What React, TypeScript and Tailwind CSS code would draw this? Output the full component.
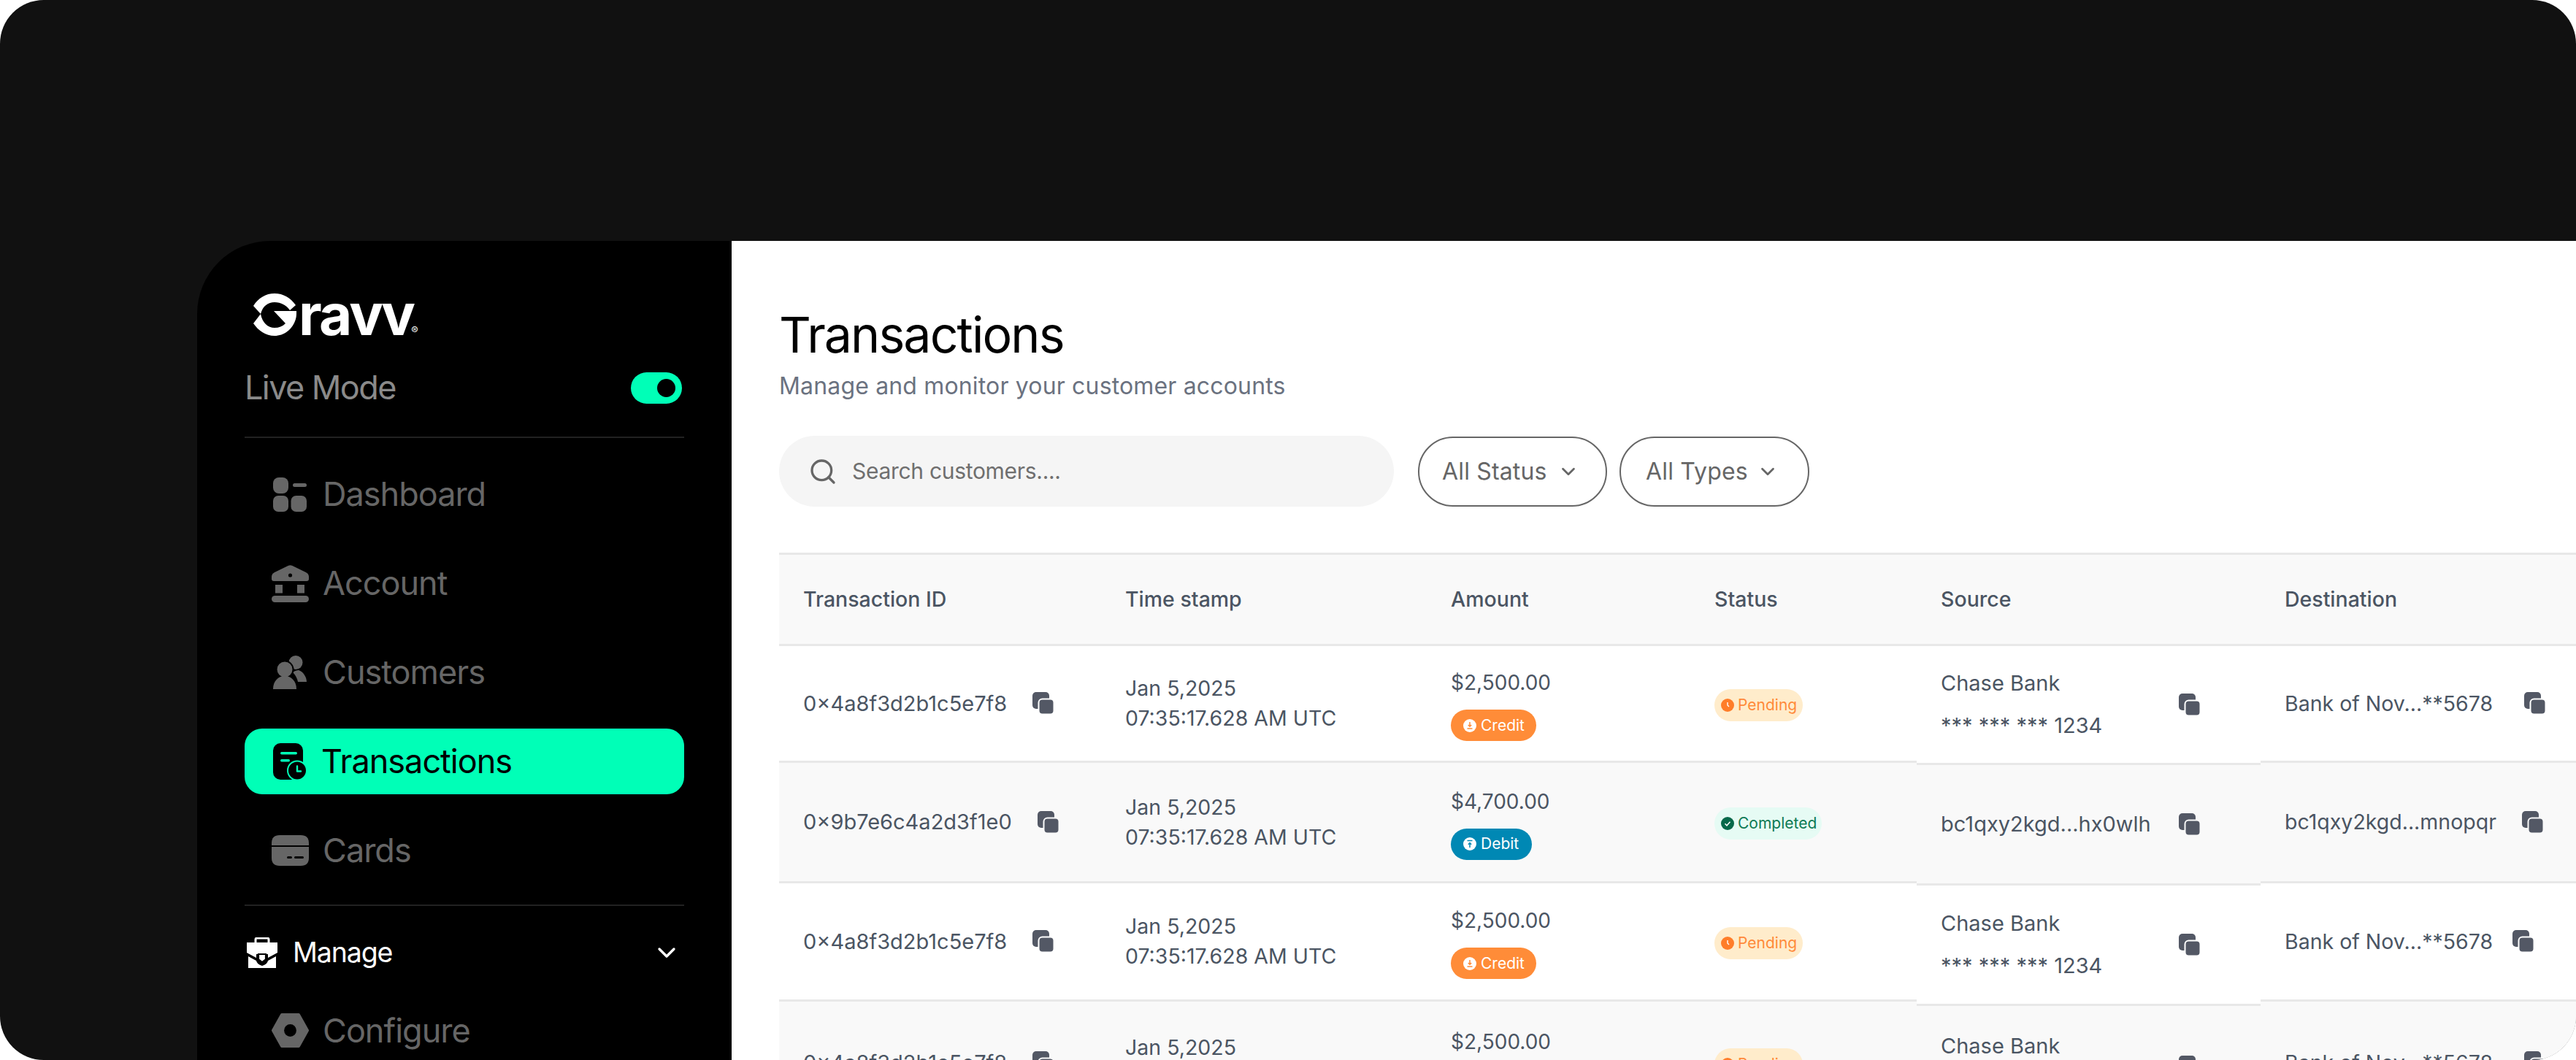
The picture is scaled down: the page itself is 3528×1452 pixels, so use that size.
import React from 'react';
import { ChevronDown, Search } from 'lucide-react';

// Нижние границы строк немного разные в колонках, поэтому таблица собрана по колонкам
const rowHeights = [160, 165, 162, 170];
const sourceHeights = [163, 165, 165, 170];

type Kind = 'Credit' | 'Debit';
type Status = 'Pending' | 'Completed';

const rows: {
  id: string;
  kind: Kind;
  amount: string;
  status: Status;
  source: string;
  sourceSub?: string;
  dest: string;
  destGap: string;
}[] = [
  { id: '0×4a8f3d2b1c5e7f8', kind: 'Credit', amount: '$2,500.00', status: 'Pending', source: 'Chase Bank', sourceSub: '*** *** *** 1234', dest: 'Bank of Nov...**5678', destGap: 'ml-[43px]' },
  { id: '0×9b7e6c4a2d3f1e0', kind: 'Debit', amount: '$4,700.00', status: 'Completed', source: 'bc1qxy2kgd...hx0wlh', dest: 'bc1qxy2kgd...mnopqr', destGap: 'ml-[35px]' },
  { id: '0×4a8f3d2b1c5e7f8', kind: 'Credit', amount: '$2,500.00', status: 'Pending', source: 'Chase Bank', sourceSub: '*** *** *** 1234', dest: 'Bank of Nov...**5678', destGap: 'ml-[27px]' },
  { id: '0×4a8f3d2b1c5e7f8', kind: 'Credit', amount: '$2,500.00', status: 'Pending', source: 'Chase Bank', sourceSub: '*** *** *** 1234', dest: 'Bank of Nov...**5678', destGap: 'ml-[43px]' },
];

function CopyIcon({ zebra }: { zebra: boolean }) {
  return (
    <svg viewBox="0 0 30 31" className="h-[31px] w-[30px] shrink-0">
      <rect x="0" y="0" width="23" height="23" rx="5" fill="#535865" />
      <rect x="8.5" y="9.5" width="21" height="21" rx="5" fill="#535865" stroke={zebra ? '#f9f9f9' : '#ffffff'} strokeWidth="2" />
    </svg>
  );
}

function DashboardIcon() {
  return (
    <svg viewBox="0 0 46 47" className="h-[47px] w-[46px]" fill="#666666">
      <rect x="0" y="0" width="21" height="22" rx="8" />
      <rect x="27" y="8" width="19" height="5" rx="2.5" />
      <rect x="0" y="25" width="21" height="22" rx="7" />
      <rect x="24.5" y="25" width="21.5" height="22" rx="7" />
    </svg>
  );
}

function AccountIcon() {
  return (
    <svg viewBox="0 0 51 51" className="h-[51px] w-[51px]" fill="#666666">
      <path d="M23 .8q2.5-1.2 5 0L47 10q4 2 4 6v3q0 3-3 3H3q-3 0-3-3v-3q0-4 4-6z" />
      <circle cx="25.5" cy="14" r="2.6" fill="#000000" />
      <rect x="5" y="27" width="10" height="11.5" />
      <rect x="35" y="27" width="10" height="11.5" />
      <rect x="0" y="42" width="51" height="9" rx="4.5" />
    </svg>
  );
}

function CustomersIcon() {
  return (
    <svg viewBox="0 0 46 46" className="h-[46px] w-[46px]" fill="#666666">
      <circle cx="31" cy="9.5" r="9.5" />
      <path d="M27 23c2-2 6-3 8-3 6 2 11 9 11 16H34c-1-5-3-9-7-13z" />
      <circle cx="16" cy="19" r="11.5" stroke="#000000" strokeWidth="2" />
      <path d="M0 46c0-11 7-18 16-18s16 7 16 18z" />
    </svg>
  );
}

function TransactionsIcon() {
  return (
    <svg viewBox="0 0 47 51" className="h-[51px] w-[47px]">
      <rect x="0" y="0" width="41" height="50" rx="10" fill="#000000" />
      <rect x="10" y="12" width="23" height="3.5" rx="1.7" fill="#00ffb7" />
      <rect x="10" y="22" width="13" height="3.5" rx="1.7" fill="#00ffb7" />
      <circle cx="33" cy="37.5" r="13" fill="#000000" stroke="#00ffb7" strokeWidth="2" />
      <path d="M33 31.5v7h5" fill="none" stroke="#00ffb7" strokeWidth="2.4" strokeLinecap="round" strokeLinejoin="round" />
    </svg>
  );
}

function CardsIcon() {
  return (
    <svg viewBox="0 0 51 42" className="h-[42px] w-[51px]" fill="#666666">
      <path d="M0 11Q0 0 11 0h29q11 0 11 11v3H0z" />
      <path d="M0 16h51v15q0 11-11 11H11Q0 42 0 31z" />
      <rect x="21" y="29" width="7" height="3" rx="1.5" fill="#000000" />
      <rect x="31" y="29" width="13" height="3" rx="1.5" fill="#000000" />
    </svg>
  );
}

function ManageIcon() {
  return (
    <svg viewBox="0 0 42 42" className="h-[42px] w-[42px]" fill="#ffffff">
      <path d="M12 8V3q0-2 2-2h14q2 0 2 2v5" fill="none" stroke="#ffffff" strokeWidth="3" />
      <path d="M0 7h42v14l-13 7v-5H13v5L0 21z" />
      <path d="M2 26l11 6q1 5 8 7 7-2 8-7l11-6v16H2z" />
      <path d="M16 23h10v7l-5 4-5-4z" fill="#ffffff" stroke="#000000" strokeWidth="2.2" />
    </svg>
  );
}

function ConfigureIcon() {
  return (
    <svg viewBox="0 0 51 47" className="h-[47px] w-[51px]">
      <path fillRule="evenodd" fill="#666666" stroke="#666666" strokeWidth="4" strokeLinejoin="round" d="M2 23.5 14 2h23l12 21.5L37 45H14zM25.5 15a8.5 8.5 0 1 0 0 17 8.5 8.5 0 0 0 0-17z" />
      <circle cx="25.5" cy="23.5" r="8.4" fill="#000000" />
    </svg>
  );
}

function GravvMark() {
  return (
    <svg viewBox="0 0 59 58" className="h-[58px] w-[59px]" fill="#ffffff">
      <path d="M0 17C7 6 17 0 29 0c12 0 22 6 29 16l-8 7c-5-7-12-11-21-11-9 0-16 5-19 16z" />
      <path d="M0 41l10-13c2 12 10 19 19 19 6 0 11-2 15-6L28 24h31c0 4 0 8-1 11C54 49 42 58 29 58 17 58 7 51 0 41z" />
    </svg>
  );
}

function NavItem({ icon, label, active }: { icon: React.ReactNode; label: string; active?: boolean }) {
  return (
    <div
      className={`flex h-[90px] items-center rounded-[24px] pl-[35px] text-[45px] tracking-[-0.022em] ${
        active ? 'bg-[#00ffb7] text-black' : 'text-[#666666]'
      }`}
    >
      <div className="flex w-[54px] justify-center">{icon}</div>
      <span className={active ? 'ml-[16px]' : 'ml-[18px]'}>{label}</span>
    </div>
  );
}

function KindBadge({ kind }: { kind: Kind }) {
  const credit = kind === 'Credit';
  return (
    <div
      className={`flex h-[43px] items-center gap-[6px] self-start rounded-full pl-[17px] text-[21px] text-white ${
        credit ? 'w-[117px] bg-[#ff8c38]' : 'w-[111px] bg-[#0088b4]'
      }`}
    >
      <svg viewBox="0 0 18 18" className="h-[18px] w-[18px]">
        <circle cx="9" cy="9" r="9" fill="#ffffff" />
        {credit ? (
          <path d="M9 4v6M6.8 8 9 10.2 11.2 8M5.5 13h7" fill="none" stroke="#ff8c38" strokeWidth="1.5" />
        ) : (
          <path d="M5.5 4.5h7M9 14V7.5M6.8 9.7 9 7.5l2.2 2.2" fill="none" stroke="#0088b4" strokeWidth="1.5" />
        )}
      </svg>
      <span>{kind}</span>
    </div>
  );
}

function StatusBadge({ status }: { status: Status }) {
  const pending = status === 'Pending';
  return (
    <div
      className={`flex h-[44px] items-center gap-[5px] rounded-full pl-[9px] text-[21px] ${
        pending ? 'w-[121px] bg-[#ffeccb] text-[#ff8a3a]' : 'w-[147px] bg-[#e6fbf4] text-[#0e7a55]'
      }`}
    >
      <svg viewBox="0 0 18 18" className="h-[18px] w-[18px]">
        <circle cx="9" cy="9" r="9" fill={pending ? '#ff7d29' : '#07694a'} />
        {pending ? (
          <path d="M9 5v4l2 2" fill="none" stroke="#ffffff" strokeWidth="1.4" />
        ) : (
          <path d="M5.5 9.3 8 11.8l4.5-5" fill="none" stroke="#ffffff" strokeWidth="1.5" />
        )}
      </svg>
      <span>{status}</span>
    </div>
  );
}

function Column({
  title,
  width,
  heights = rowHeights,
  cellClass = '',
  children,
}: {
  title: string;
  width: string;
  heights?: number[];
  cellClass?: string;
  children: (i: number) => React.ReactNode;
}) {
  return (
    <div className={`flex shrink-0 flex-col ${width}`}>
      <div className="flex h-[128px] items-center border-y-[3px] border-[#e8e8e8] bg-[#f9f9f9] pl-[33px] font-medium">
        {title}
      </div>
      {heights.map((h, i) => (
        <div
          key={i}
          style={{ height: h }}
          className={`flex items-center border-b-[3px] border-[#e8e8e8] pl-[33px] ${cellClass} ${i % 2 === 1 ? 'bg-[#f9f9f9]' : 'bg-white'}`}
        >
          {children(i)}
        </div>
      ))}
    </div>
  );
}

function Pill({ label, className }: { label: string; className: string }) {
  return (
    <div className={`flex h-[96px] items-center justify-between rounded-full border-[2px] border-[#666666] text-[32px] tracking-[0.005em] text-[#666666] ${className}`}>
      <span>{label}</span>
      <ChevronDown size={30} strokeWidth={2.2} />
    </div>
  );
}

export default function App() {
  return (
    <div className="flex h-[1452px] w-[3528px] overflow-hidden rounded-[60px] bg-[#111111] pl-[270px] pt-[330px] font-['Inter',sans-serif]">
      {/* Sidebar */}
      <aside className="h-full w-[732px] shrink-0 rounded-tl-[100px] bg-black px-[65px] pt-[72px]">
        <div className="flex items-end pl-[12px]">
          <GravvMark />
          <span className="ml-[3px] text-[78px] font-bold leading-[58px] tracking-[-0.035em] text-white">ravv</span>
          <span className="-ml-[3px] text-[14px] leading-none text-white">®</span>
        </div>
        <div className="mt-[46px] flex h-[50px] items-center justify-between pr-[3px]">
          <span className="text-[45px] tracking-[-0.035em] text-[#8a8a8a]">Live Mode</span>
          <div className="flex h-[43px] w-[70px] items-center justify-end rounded-full bg-[#00ffb7] pr-[9px]">
            <div className="h-[25px] w-[25px] rounded-full bg-black" />
          </div>
        </div>
        <div className="mt-[42px] h-[2px] bg-[#222222]" />
        <nav className="mt-[32px] flex flex-col gap-[32px]">
          <NavItem icon={<DashboardIcon />} label="Dashboard" />
          <NavItem icon={<AccountIcon />} label="Account" />
          <NavItem icon={<CustomersIcon />} label="Customers" />
          <NavItem icon={<TransactionsIcon />} label="Transactions" active />
          <NavItem icon={<CardsIcon />} label="Cards" />
        </nav>
        <div className="mt-[29px] h-[2px] bg-[#222222]" />
        <div className="mt-[36px] flex items-center justify-between pl-[3px] pr-[4px] text-white">
          <div className="flex items-center gap-[21px]">
            <ManageIcon />
            <span className="text-[37.5px] tracking-[-0.03em]">Manage</span>
          </div>
          <ChevronDown size={40} strokeWidth={2} />
        </div>
        <div className="mt-[33px]">
          <NavItem icon={<ConfigureIcon />} label="Configure" />
        </div>
      </aside>

      {/* Main */}
      <main className="min-w-0 flex-1 overflow-hidden bg-white pl-[65px] pt-[90px]">
        <h1 className="text-[68px] leading-[76px] tracking-[-0.028em] text-black">Transactions</h1>
        <p className="mt-[13px] text-[32px] leading-[40px] tracking-[0.005em] text-[#6b7280]">Manage and monitor your customer accounts</p>
        <div className="mt-[48px] flex items-center">
          <div className="flex h-[97px] w-[842px] items-center rounded-full bg-[#f5f5f5] pl-[40px] text-[#666666]">
            <Search size={40} strokeWidth={2} />
            <span className="ml-[20px] text-[30px] tracking-[-0.01em] text-[#6f6f6f]">Search customers....</span>
          </div>
          <div className="ml-[33px] flex gap-[17px]">
            <Pill label="All Status" className="w-[259px] pl-[31px] pr-[36px]" />
            <Pill label="All Types" className="w-[260px] pl-[34px] pr-[40px]" />
          </div>
        </div>

        {/* Table */}
        <div className="mt-[63px] flex w-[3000px] text-[28.5px] leading-[34px] text-[#4b5563]">
          <Column title="Transaction ID" width="w-[441px]">
            {(i) => (
              <div className="flex items-center gap-[35px] text-[29px]">
                <span>{rows[i].id}</span>
                <CopyIcon zebra={i % 2 === 1} />
              </div>
            )}
          </Column>
          <Column title="Time stamp" width="w-[446px]">
            {() => (
              <div className="flex flex-col gap-[7px]">
                <span>Jan 5,2025</span>
                <span>07:35:17.628 AM UTC</span>
              </div>
            )}
          </Column>
          <Column title="Amount" width="w-[361px]" cellClass="pt-[6px]">
            {(i) => (
              <div className="flex flex-col gap-[20px] text-[28px]">
                <span>{rows[i].amount}</span>
                <KindBadge kind={rows[i].kind} />
              </div>
            )}
          </Column>
          <Column title="Status" width="w-[310px]" cellClass="pt-[4px]">
            {(i) => <StatusBadge status={rows[i].status} />}
          </Column>
          <Column title="Source" width="w-[471px]" heights={sourceHeights}>
            {(i) => (
              <div className="flex w-[356px] items-center justify-between text-[29px]">
                <div className="flex flex-col gap-[24px]">
                  <span>{rows[i].source}</span>
                  {rows[i].sourceSub && <span>{rows[i].sourceSub}</span>}
                </div>
                <CopyIcon zebra={i % 2 === 1} />
              </div>
            )}
          </Column>
          <Column title="Destination" width="w-[471px]">
            {(i) => (
              <div className="flex items-center">
                <span>{rows[i].dest}</span>
                <div className={rows[i].destGap}>
                  <CopyIcon zebra={i % 2 === 1} />
                </div>
              </div>
            )}
          </Column>
        </div>
      </main>
    </div>
  );
}
